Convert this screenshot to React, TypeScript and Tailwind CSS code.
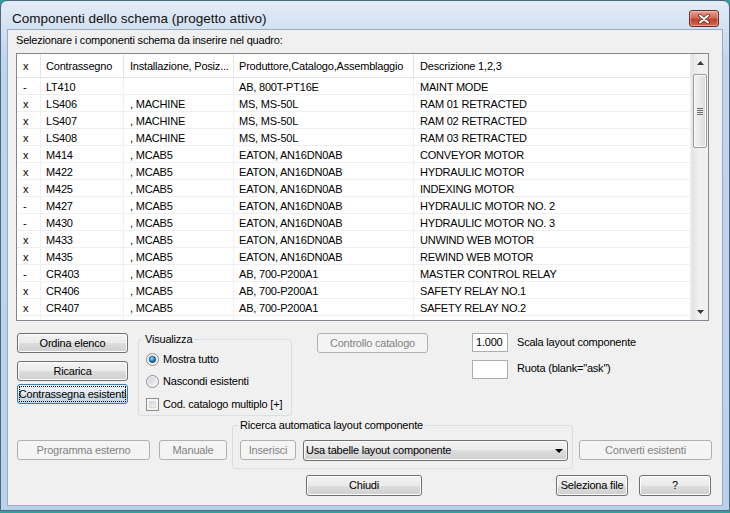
import React from "react";

const rows: [string, string, string, string, string][] = [
  ["-", "LT410", "", "AB, 800T-PT16E", "MAINT MODE"],
  ["x", "LS406", ", MACHINE", "MS, MS-50L", "RAM 01 RETRACTED"],
  ["x", "LS407", ", MACHINE", "MS, MS-50L", "RAM 02 RETRACTED"],
  ["x", "LS408", ", MACHINE", "MS, MS-50L", "RAM 03 RETRACTED"],
  ["x", "M414", ", MCAB5", "EATON, AN16DN0AB", "CONVEYOR MOTOR"],
  ["x", "M422", ", MCAB5", "EATON, AN16DN0AB", "HYDRAULIC MOTOR"],
  ["x", "M425", ", MCAB5", "EATON, AN16DN0AB", "INDEXING MOTOR"],
  ["-", "M427", ", MCAB5", "EATON, AN16DN0AB", "HYDRAULIC MOTOR NO. 2"],
  ["-", "M430", ", MCAB5", "EATON, AN16DN0AB", "HYDRAULIC MOTOR NO. 3"],
  ["x", "M433", ", MCAB5", "EATON, AN16DN0AB", "UNWIND WEB MOTOR"],
  ["x", "M435", ", MCAB5", "EATON, AN16DN0AB", "REWIND WEB MOTOR"],
  ["-", "CR403", ", MCAB5", "AB, 700-P200A1", "MASTER CONTROL RELAY"],
  ["x", "CR406", ", MCAB5", "AB, 700-P200A1", "SAFETY RELAY NO.1"],
  ["x", "CR407", ", MCAB5", "AB, 700-P200A1", "SAFETY RELAY NO.2"],
  ["", "", "", "", ""],
];

function Btn({
  children,
  className = "",
  disabled = false,
}: {
  children: React.ReactNode;
  className?: string;
  disabled?: boolean;
}) {
  if (disabled) {
    return (
      <div
        className={`h-[20px] shrink-0 flex items-center justify-center rounded-[3px] border border-[#adb2b5] bg-[#f4f4f4] text-[#838383] ${className}`}
      >
        {children}
      </div>
    );
  }
  return (
    <div
      className={`h-[20px] shrink-0 flex items-center justify-center rounded-[3px] border border-[#707070] bg-[linear-gradient(to_bottom,#f2f2f2_0%,#ebebeb_50%,#dddddd_50%,#cfcfcf_100%)] shadow-[inset_0_0_0_1px_#fcfcfc] text-black ${className}`}
    >
      {children}
    </div>
  );
}

function Radio({ checked }: { checked: boolean }) {
  return (
    <svg width="13" height="13" viewBox="0 0 13 13" className="shrink-0">
      <defs>
        <linearGradient id="rbg" x1="0" y1="0" x2="1" y2="1">
          <stop offset="0" stopColor="#cbcfd5" />
          <stop offset="1" stopColor="#f7f7f7" />
        </linearGradient>
        <radialGradient id="rdot" cx="0.4" cy="0.35" r="0.7">
          <stop offset="0" stopColor="#b6e1fb" />
          <stop offset="0.45" stopColor="#2a8fd3" />
          <stop offset="1" stopColor="#0c4a7e" />
        </radialGradient>
      </defs>
      <circle cx="6.5" cy="6.5" r="6" fill="#f4f4f4" stroke="#8e8f8f" />
      <circle cx="6.5" cy="6.5" r="4.5" fill="url(#rbg)" />
      {checked && <circle cx="6.5" cy="6.5" r="3.2" fill="url(#rdot)" stroke="#1a4f7a" strokeWidth="0.6" />}
    </svg>
  );
}

function Check() {
  return (
    <div className="w-[13px] h-[13px] shrink-0 border border-[#8e8f8f] bg-[#f4f4f4] p-[2px]">
      <div className="w-full h-full bg-[linear-gradient(135deg,#cbcfd5,#f6f6f6)] border border-[#d8d8d8]" />
    </div>
  );
}

const cols = ["w-[24px] pl-[6px]", "w-[83px] pl-[5px]", "w-[110px] pl-[6px]", "w-[180px] pl-[5px]", "flex-1 pl-[6px]"];

export default function App() {
  return (
    <div className="w-[730px] h-[513px] bg-[#2aa39b] font-['Liberation_Sans',Arial,sans-serif] text-[11px] tracking-[-0.2px] text-black">
      <div className="w-[730px] h-[511px] rounded-t-[7px] border border-[#4f6883] bg-[linear-gradient(to_bottom,#e3ecf6_0px,#d2e1f1_28px,#bfd5ec_60px,#b9d1ea_100%)] flex flex-col">
        {/* Title bar */}
        <div className="h-[28px] flex items-start pt-[9px] pl-[11px] pr-[10px] shrink-0">
          <div className="flex-1 text-[13.5px] leading-[17px] tracking-[0px] text-[#111]">
            Componenti dello schema (progetto attivo)
          </div>
          <div className="w-[30px] h-[17px] rounded-[3px] border border-[#6b2a26] bg-[linear-gradient(to_bottom,#e8a090_0%,#d56a56_45%,#c2402c_55%,#d46a50_100%)] shadow-[inset_0_0_0_1px_rgba(255,255,255,0.35)] flex items-center justify-center">
            <svg width="12" height="10" viewBox="0 0 12 10">
              <path d="M2 1.5 L10 8.5 M10 1.5 L2 8.5" stroke="#5a2a22" strokeWidth="3.6" strokeLinecap="round" />
              <path d="M2 1.5 L10 8.5 M10 1.5 L2 8.5" stroke="#ffffff" strokeWidth="2" strokeLinecap="round" />
            </svg>
          </div>
        </div>

        {/* Content */}
        <div className="ml-[6px] w-[716px] h-[477px] border border-[#98adc3] bg-[#f0f0f0] flex flex-col shrink-0">
          <div className="ml-[8px] mt-[4px] leading-[13px]">Selezionare i componenti schema da inserire nel quadro:</div>

          {/* List view */}
          <div className="ml-[8px] mt-[6px] w-[693px] h-[268px] border border-[#828790] bg-white flex shrink-0">
            <div className="flex-1 flex flex-col overflow-hidden">
              <div className="h-[24px] shrink-0 flex border-b border-[#e5e5e5]">
                {["x", "Contrassegno", "Installazione, Posiz...", "Produttore,Catalogo,Assemblaggio", "Descrizione 1,2,3"].map((h, i) => (
                  <div key={i} className={`${cols[i]} shrink-0 h-full flex items-center pt-[2px] border-r border-[#e5e5e5] whitespace-nowrap overflow-hidden`}>
                    {h}
                  </div>
                ))}
              </div>
              {rows.map((r, ri) => (
                <div key={ri} className="h-[17px] shrink-0 flex border-b border-[#f0f0f0]">
                  {r.map((c, ci) => (
                    <div key={ci} className={`${cols[ci]} shrink-0 h-full flex items-center pt-[2px] border-r border-[#f0f0f0] whitespace-nowrap overflow-hidden`}>
                      {c}
                    </div>
                  ))}
                </div>
              ))}
            </div>
            {/* Scrollbar */}
            <div className="w-[17px] shrink-0 bg-[linear-gradient(to_right,#e3e3e3,#f0f0f0_40%,#f2f2f2)] border-l border-[#e8e8e8] flex flex-col">
              <div className="h-[17px] flex items-center justify-center shrink-0">
                <svg width="7" height="4" viewBox="0 0 7 4"><path d="M3.5 0 L7 4 L0 4 Z" fill="#3a3a3a" /></svg>
              </div>
              <div className="mt-[3px] mx-[1px] h-[74px] rounded-[2px] border border-[#9a9a9a] bg-[linear-gradient(to_right,#f3f3f3,#e8e8e8_50%,#d8d8d8)] shadow-[inset_0_0_0_1px_#fafafa] flex flex-col items-center justify-center gap-[1px]">
                <div className="w-[6px] h-[1px] bg-[#6e6e6e]" />
                <div className="w-[6px] h-[1px] bg-[#6e6e6e]" />
                <div className="w-[6px] h-[1px] bg-[#6e6e6e]" />
                <div className="w-[6px] h-[1px] bg-[#6e6e6e]" />
              </div>
              <div className="flex-1" />
              <div className="h-[17px] flex items-center justify-center shrink-0">
                <svg width="7" height="4" viewBox="0 0 7 4"><path d="M0 0 L7 0 L3.5 4 Z" fill="#3a3a3a" /></svg>
              </div>
            </div>
          </div>

          {/* Middle section */}
          <div className="mt-[12px] flex items-start h-[83px] shrink-0">
            <div className="ml-[9px] w-[111px] flex flex-col">
              <Btn className="w-[111px]">Ordina elenco</Btn>
              <Btn className="w-[111px] mt-[8px]">Ricarica</Btn>
              <div className="w-[111px] mt-[3px] h-[20px] rounded-[3px] border border-[#3c7fb1] bg-[linear-gradient(to_bottom,#eef4f9_0%,#e3ecf3_50%,#d3e0ea_50%,#c7d7e4_100%)] p-[1px]">
                <div className="w-full h-full border border-dotted border-black flex items-center justify-center whitespace-nowrap">
                  Contrassegna esistenti
                </div>
              </div>
            </div>

            <fieldset className="ml-[10px] w-[154px] h-[83px] border border-[#d5dfe5] rounded-[3px] pl-[7px]">
              <legend className="ml-[-3px] px-[2px] leading-[13px]">Visualizza</legend>
              <div className="mt-[5px] h-[16px] flex items-center gap-[4px]">
                <Radio checked />
                <span>Mostra tutto</span>
              </div>
              <div className="mt-[6px] h-[16px] flex items-center gap-[4px]">
                <Radio checked={false} />
                <span>Nascondi esistenti</span>
              </div>
              <div className="mt-[7px] h-[16px] flex items-center gap-[4px]">
                <Check />
                <span>Cod. catalogo multiplo [+]</span>
              </div>
            </fieldset>

            <Btn disabled className="ml-[25px] w-[111px]">Controllo catalogo</Btn>

            <div className="ml-[44px] flex flex-col">
              <div className="flex items-center">
                <div className="w-[36px] h-[19px] border border-[#abadb3] bg-white flex items-center pl-[3px]">1.000</div>
                <span className="ml-[9px]">Scala layout componente</span>
              </div>
              <div className="flex items-center mt-[8px]">
                <div className="w-[36px] h-[19px] border border-[#abadb3] bg-white" />
                <span className="ml-[9px] mb-[3px]">Ruota (blank="ask")</span>
              </div>
            </div>
          </div>

          {/* Bottom row 1 */}
          <div className="mt-[3px] flex items-start shrink-0">
            <Btn disabled className="ml-[9px] mt-[21px] w-[133px]">Programma esterno</Btn>
            <Btn disabled className="ml-[9px] mt-[21px] w-[68px]">Manuale</Btn>
            <fieldset className="ml-[5px] w-[341px] h-[50px] border border-[#d5dfe5] rounded-[3px] pl-[7px]">
              <legend className="ml-[-2px] px-[2px] leading-[13px]">Ricerca automatica layout componente</legend>
              <div className="mt-[8px] flex items-start">
                <Btn disabled className="w-[56px]">Inserisci</Btn>
                <div className="ml-[7px] w-[265px] h-[21px] rounded-[3px] border border-[#707070] bg-[linear-gradient(to_bottom,#f2f2f2_0%,#ebebeb_50%,#dddddd_50%,#cfcfcf_100%)] shadow-[inset_0_0_0_1px_#fcfcfc] flex items-center pl-[2px] pr-[4px]">
                  <span className="flex-1">Usa tabelle layout componente</span>
                  <svg width="8" height="4" viewBox="0 0 8 4"><path d="M0 0 L8 0 L4 4 Z" fill="#000" /></svg>
                </div>
              </div>
            </fieldset>
            <Btn disabled className="ml-[6px] mt-[21px] w-[133px]">Converti esistenti</Btn>
          </div>

          {/* Bottom row 2 */}
          <div className="mt-[6px] flex items-start shrink-0">
            <Btn className="ml-[298px] w-[116px] h-[21px]">Chiudi</Btn>
            <Btn className="ml-[134px] w-[72px] h-[21px]">Seleziona file</Btn>
            <Btn className="ml-[11px] w-[72px] h-[21px]">?</Btn>
          </div>
        </div>
      </div>
    </div>
  );
}
